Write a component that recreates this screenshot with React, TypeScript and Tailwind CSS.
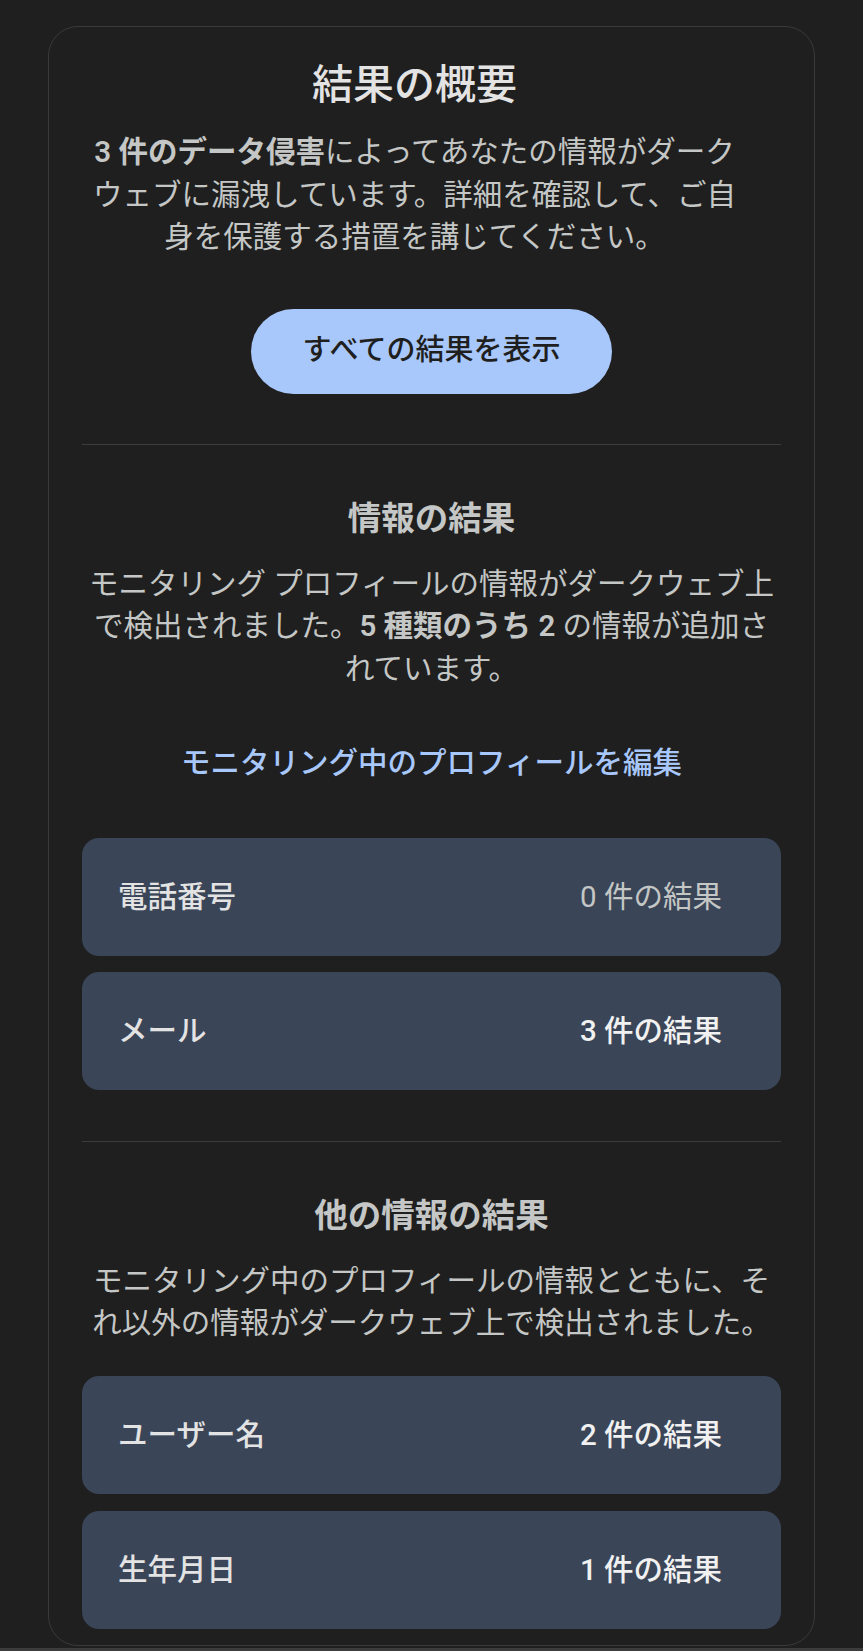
export default function App() {
  const rows1 = [
    { label: "電話番号", count: "0 件の結果", zero: true },
    { label: "メール", count: "3 件の結果", zero: false },
  ];
  const rows2 = [
    { label: "ユーザー名", count: "2 件の結果", zero: false },
    { label: "生年月日", count: "1 件の結果", zero: false },
  ];

  const Row = ({ label, count, zero }: { label: string; count: string; zero: boolean }) => (
    <div className="flex h-[118px] items-center justify-between rounded-[17px] bg-[#3a4558] pl-[36px] pr-[59px] text-[29.5px] leading-[42px]">
      <span className="font-medium text-[#e3e3e3]">{label}</span>
      <span className={zero ? "text-[#c4c7c5]" : "font-medium text-[#f1f1f1]"}>{count}</span>
    </div>
  );

  return (
    <div
      className="flex min-h-[1651px] w-full flex-col bg-[#1f1f1f]"
      style={{ fontFamily: "Roboto, 'Noto Sans CJK JP', sans-serif" }}
    >
      <div className="mx-[48px] mt-[26px] h-[1620px] rounded-[30px] border border-[#3a3a3a] px-[33px] pt-[32px]">
        {/* overview */}
        <div className="flex flex-col items-center pr-[34px] text-center">
          <h1 className="text-[41px] font-medium leading-[52px] text-[#e3e3e3]">結果の概要</h1>
          <p className="mt-[20px] text-[29.5px] leading-[42.5px] text-[#c4c7c5]">
            <span className="font-semibold">3 件のデータ侵害</span>
            によってあなたの情報がダークウェブに漏洩しています。詳細を確認して、ご自身を保護する措置を講じてください。
          </p>
        </div>
        <div className="mt-[50px] flex justify-center">
          <button className="h-[85px] w-[361px] rounded-full bg-[#a8c7fa] text-[29px] font-medium text-[#1f1f1f]">
            すべての結果を表示
          </button>
        </div>

        <div className="mt-[50px] h-px bg-[#3c3c3c]" />

        {/* profile results */}
        <div className="flex flex-col items-center text-center">
          <h2 className="mt-[52px] text-[33.5px] font-bold leading-[44px] text-[#c4c7c5]">情報の結果</h2>
          <p className="mt-[22px] text-[29.5px] leading-[42.5px] text-[#c4c7c5]">
            モニタリング プロフィールの情報がダークウェブ上で検出されました。
            <span className="font-semibold">5 種類のうち 2</span>
            {" の情報が追加されています。"}
          </p>
          <a className="mt-[52px] text-[29.5px] font-medium leading-[42.5px] text-[#a8c7fa]">
            モニタリング中のプロフィールを編集
          </a>
        </div>
        <div className="mt-[53px] flex flex-col gap-[16px]">
          {rows1.map((r) => (
            <Row key={r.label} {...r} />
          ))}
        </div>

        <div className="mt-[51px] h-px bg-[#3c3c3c]" />

        {/* other results */}
        <div className="flex flex-col items-center text-center">
          <h2 className="mt-[52px] text-[33.5px] font-bold leading-[44px] text-[#c4c7c5]">他の情報の結果</h2>
          <p className="mt-[22px] text-[29.5px] leading-[42.5px] text-[#c4c7c5]">
            モニタリング中のプロフィールの情報とともに、それ以外の情報がダークウェブ上で検出されました。
          </p>
        </div>
        <div className="mt-[31px] flex flex-col gap-[17px]">
          {rows2.map((r) => (
            <Row key={r.label} {...r} />
          ))}
        </div>
      </div>
      <div className="mt-auto h-[3px] bg-[#3c3c3c]" />
    </div>
  );
}
